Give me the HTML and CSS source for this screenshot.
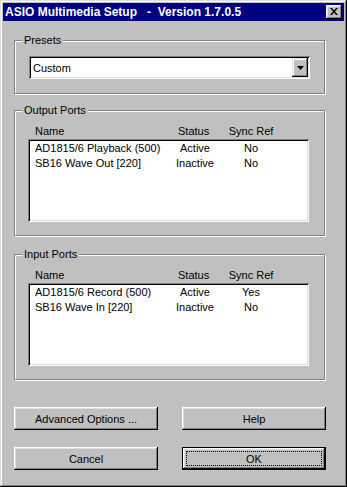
FILE: index.html
```html
<!DOCTYPE html>
<html lang="en">
<head>
    <meta charset="UTF-8">
    <meta name="viewport" content="width=device-width, initial-scale=1.0">
    <title>ASIO Multimedia Setup</title>
    <link rel="stylesheet" href="styles.css">
</head>
<body>

    <div class="window">
        <!-- title bar -->
        <div class="titlebar">
            <span class="title">ASIO Multimedia Setup   -  Version 1.7.0.5</span>
            <span class="close-btn">
                <svg width="8" height="7" viewBox="0 0 8 7">
                    <path d="M0 0h2l2 2.5L6 0h2L5 3.5 8 7H6L4 4.5 2 7H0l3-3.5z" fill="#000"/>
                </svg>
            </span>
        </div>

        <div class="content">
            <!-- presets -->
            <div class="group presets">
                <div class="group-title">Presets</div>
                <div class="combo">
                    <span class="combo-text">Custom</span>
                    <span class="combo-btn">
                        <svg width="7" height="4" viewBox="0 0 7 4">
                            <path d="M0 0h7L3.5 4z" fill="#000"/>
                        </svg>
                    </span>
                </div>
            </div>

            <!-- output ports -->
            <div class="group ports">
                <div class="group-title">Output Ports</div>
                <div class="port-head">
                    <span>Name</span>
                    <span>Status</span>
                    <span>Sync Ref</span>
                </div>
                <div class="listbox">
                    <div class="port-row">
                        <span>AD1815/6 Playback (500)</span>
                        <span>Active</span>
                        <span>No</span>
                    </div>
                    <div class="port-row">
                        <span>SB16 Wave Out [220]</span>
                        <span>Inactive</span>
                        <span>No</span>
                    </div>
                </div>
            </div>

            <!-- input ports -->
            <div class="group ports input">
                <div class="group-title">Input Ports</div>
                <div class="port-head">
                    <span>Name</span>
                    <span>Status</span>
                    <span>Sync Ref</span>
                </div>
                <div class="listbox">
                    <div class="port-row">
                        <span>AD1815/6 Record (500)</span>
                        <span>Active</span>
                        <span>Yes</span>
                    </div>
                    <div class="port-row">
                        <span>SB16 Wave In [220]</span>
                        <span>Inactive</span>
                        <span>No</span>
                    </div>
                </div>
            </div>

            <!-- buttons -->
            <div class="buttons">
                <button class="btn">Advanced Options ...</button>
                <button class="btn">Help</button>
                <button class="btn">Cancel</button>
                <button class="btn default">OK</button>
            </div>
        </div>
    </div>

</body>
</html>
```

FILE: styles.css
```css
body {
    margin: 0;
    padding: 0;
    background-color: #c0c0c0;
    font-family: 'Liberation Sans', Arial, sans-serif;
    font-size: 11px;
    color: #000;
}

.window {
    width: 347px;
    height: 487px;
    box-sizing: border-box;
    padding: 3px;
    background-color: #c0c0c0;
    box-shadow: inset -1px -1px #000, inset 1px 1px #dfdfdf,
                inset -2px -2px #808080, inset 2px 2px #fff;
}

.titlebar {
    height: 18px;
    background-color: #000080;
    color: #fff;
    display: flex;
    align-items: center;
    justify-content: space-between;
    padding: 0 2px 0 2px;
}

.title {
    font-weight: bold;
    font-size: 12px;
    white-space: pre;
}

.close-btn {
    width: 16px;
    height: 14px;
    box-sizing: border-box;
    background-color: #c0c0c0;
    display: flex;
    align-items: center;
    justify-content: center;
    padding: 0 1px 1px 0;
    box-shadow: inset -1px -1px #000, inset 1px 1px #fff,
                inset -2px -2px #808080, inset 2px 2px #dfdfdf;
}

.content {
    width: 312px;
    margin: 19px 0 0 11px;
}

.group {
    width: 311px;
    box-sizing: border-box;
    border: 1px solid #808080;
    box-shadow: 1px 1px 0 #fff, inset 1px 1px 0 #fff;
}

.group-title {
    width: fit-content;
    margin: -8px 0 0 7px;
    padding: 0 2px;
    line-height: 15px;
    background-color: #c0c0c0;
}

.presets {
    padding-bottom: 14px;
}

.combo {
    width: 281px;
    height: 23px;
    box-sizing: border-box;
    margin: 8px 0 0 14px;
    padding: 2px;
    background-color: #fff;
    display: flex;
    align-items: stretch;
    box-shadow: inset 1px 1px #808080, inset -1px -1px #fff,
                inset 2px 2px #000, inset -2px -2px #dfdfdf;
}

.combo-text {
    flex: 1;
    display: flex;
    align-items: center;
    padding-left: 2px;
}

.combo-btn {
    width: 16px;
    background-color: #c0c0c0;
    display: flex;
    align-items: center;
    justify-content: center;
    box-shadow: inset -1px -1px #000, inset 1px 1px #dfdfdf,
                inset -2px -2px #808080, inset 2px 2px #fff;
}

.ports {
    margin-top: 16px;
    padding-bottom: 13px;
}

.ports.input {
    margin-top: 18px;
}

.port-head,
.port-row {
    display: grid;
    grid-template-columns: 135px 60px 52px;
    line-height: 15px;
    white-space: nowrap;
}

.port-head span,
.port-row span {
    text-align: center;
}

.port-head span:first-child,
.port-row span:first-child {
    text-align: left;
    padding-left: 5px;
}

.port-head {
    margin: 6px 0 0 15px;
}

.port-head span:nth-child(2) {
    text-align: left;
    padding-left: 13px;
}

.listbox {
    width: 281px;
    height: 83px;
    box-sizing: border-box;
    margin-left: 13px;
    padding: 2px;
    background-color: #fff;
    box-shadow: inset 1px 1px #808080, inset -1px -1px #fff,
                inset 2px 2px #000, inset -2px -2px #dfdfdf;
}

.buttons {
    display: grid;
    grid-template-columns: 144px 144px;
    column-gap: 24px;
    row-gap: 17px;
    margin-top: 27px;
}

.btn {
    position: relative;
    height: 23px;
    padding: 0;
    border: none;
    background-color: #c0c0c0;
    font-family: 'Liberation Sans', Arial, sans-serif;
    font-size: 11px;
    color: #000;
    box-shadow: inset -1px -1px #000, inset 1px 1px #fff,
                inset -2px -2px #808080, inset 2px 2px #dfdfdf;
}

.btn.default {
    box-shadow: inset 0 0 0 1px #000,
                inset -2px -2px #000, inset 2px 2px #fff,
                inset -3px -3px #808080, inset 3px 3px #dfdfdf;
}

.btn.default::after {
    content: '';
    position: absolute;
    top: 4px;
    left: 4px;
    right: 4px;
    bottom: 4px;
    border: 1px dotted #000;
}
```
